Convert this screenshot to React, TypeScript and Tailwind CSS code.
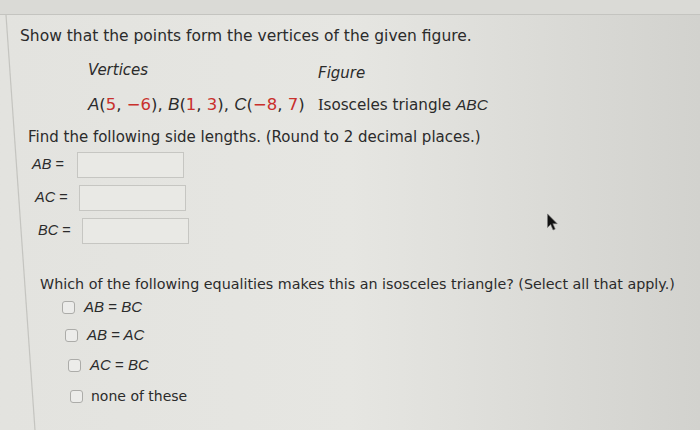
import React from "react";

const sans = { fontFamily: '"DejaVu Sans", Verdana, sans-serif' };
const math = { fontFamily: '"Liberation Sans", Arial, sans-serif' };
const serif = { fontFamily: '"Liberation Serif", "Times New Roman", serif' };

function I({ children }: { children: React.ReactNode }) {
  return (
    <span className="text-[17px] italic" style={math}>
      {children}
    </span>
  );
}
function R({ children }: { children: React.ReactNode }) {
  return <span className="text-[#c9302c]">{children}</span>;
}

function Box({ className = "" }: { className?: string }) {
  return <div className={`h-[26px] w-[107px] border border-[#c6c6c2] bg-[#e9e9e5] ${className}`} />;
}

function Check() {
  return <div className="h-[13px] w-[13px] shrink-0 rounded-[3px] border border-[#acaca9] bg-[#ececea]" />;
}

function Row({ label, pl, boxMl, mt }: { label: string; pl: string; boxMl: string; mt: string }) {
  return (
    <div className={`flex items-center ${pl} ${mt}`}>
      <span className="w-[40px] text-[14.5px] italic text-[#2b2b2b]" style={math}>
        {label} <span className="not-italic">=</span>
      </span>
      <Box className={boxMl} />
    </div>
  );
}

function Opt({ a, b, text, pl, mt }: { a?: string; b?: string; text?: string; pl: string; mt: string }) {
  return (
    <div className={`flex h-[20px] items-center ${pl} ${mt}`}>
      <Check />
      {text ? (
        <span className="ml-[8px] text-[14px] text-[#2b2b2b]" style={sans}>
          {text}
        </span>
      ) : (
        <span className="ml-[9px] text-[15px] italic text-[#2b2b2b]" style={math}>
          {a} <span className="not-italic">=</span> {b}
        </span>
      )}
    </div>
  );
}

export default function App() {
  return (
    <div
      className="relative h-[430px] w-[700px] overflow-hidden bg-linear-to-r from-[#e3e3df] via-[#e6e6e2] to-[#d2d2ce] text-[#2b2b2b]"
      style={sans}
    >
      <div className="h-[15px] border-b border-[#c4c4c0] bg-[#dadad6]" />
      <svg className="pointer-events-none absolute left-0 top-0" width="700" height="430">
        <line x1="6" y1="15" x2="35" y2="430" stroke="#c4c4c0" strokeWidth="1.2" />
      </svg>

      <div className="mt-[11px] whitespace-nowrap pl-[20px] text-[15.5px] leading-[20px]">
        Show that the points form the vertices of the given figure.
      </div>

      <div className="mt-[14px] flex text-[15px] leading-[20px]">
        <div className="w-[318px] pl-[88px] italic">Vertices</div>
        <div className="pt-[3px] italic">Figure</div>
      </div>

      <div className="mt-[10px] flex items-baseline whitespace-nowrap text-[16.5px] leading-[20px]">
        <div className="w-[318px] pl-[88px]">
          <I>A</I>(<R>5</R>, <R>−6</R>), <I>B</I>(<R>1</R>, <R>3</R>), <I>C</I>(<R>−8</R>, <R>7</R>)
        </div>
        <div className="pt-[2px] text-[15.2px]">
          <span className="text-[16.5px]" style={serif}>
            I
          </span>
          sosceles triangle{" "}
          <span className="text-[15.5px] italic" style={math}>
            ABC
          </span>
        </div>
      </div>

      <div className="mt-[12px] whitespace-nowrap pl-[28px] text-[15px] leading-[20px]">
        Find the following side lengths. (Round to 2 decimal places.)
      </div>

      <Row label="AB" pl="pl-[32px]" boxMl="ml-[5px]" mt="mt-[5px]" />
      <Row label="AC" pl="pl-[35px]" boxMl="ml-[4px]" mt="mt-[7px]" />
      <Row label="BC" pl="pl-[38px]" boxMl="ml-[4px]" mt="mt-[7px]" />

      <div className="mt-[30px] whitespace-nowrap pl-[40px] text-[14.3px] leading-[20px]">
        Which of the following equalities makes this an isosceles triangle? (Select all that apply.)
      </div>

      <Opt a="AB" b="BC" pl="pl-[62px]" mt="mt-[3px]" />
      <Opt a="AB" b="AC" pl="pl-[65px]" mt="mt-[8px]" />
      <Opt a="AC" b="BC" pl="pl-[68px]" mt="mt-[10px]" />
      <Opt text="none of these" pl="pl-[70px]" mt="mt-[11px]" />

      <svg className="pointer-events-none absolute left-[546px] top-[213px]" width="13" height="19" viewBox="0 0 14 21">
        <path
          d="M1.5 1 L1.5 16 L5 12.6 L7.6 18.8 L10 17.8 L7.4 11.8 L12.2 11.8 Z"
          fill="#111"
          stroke="#777"
          strokeWidth="0.7"
          strokeLinejoin="round"
        />
      </svg>
    </div>
  );
}
